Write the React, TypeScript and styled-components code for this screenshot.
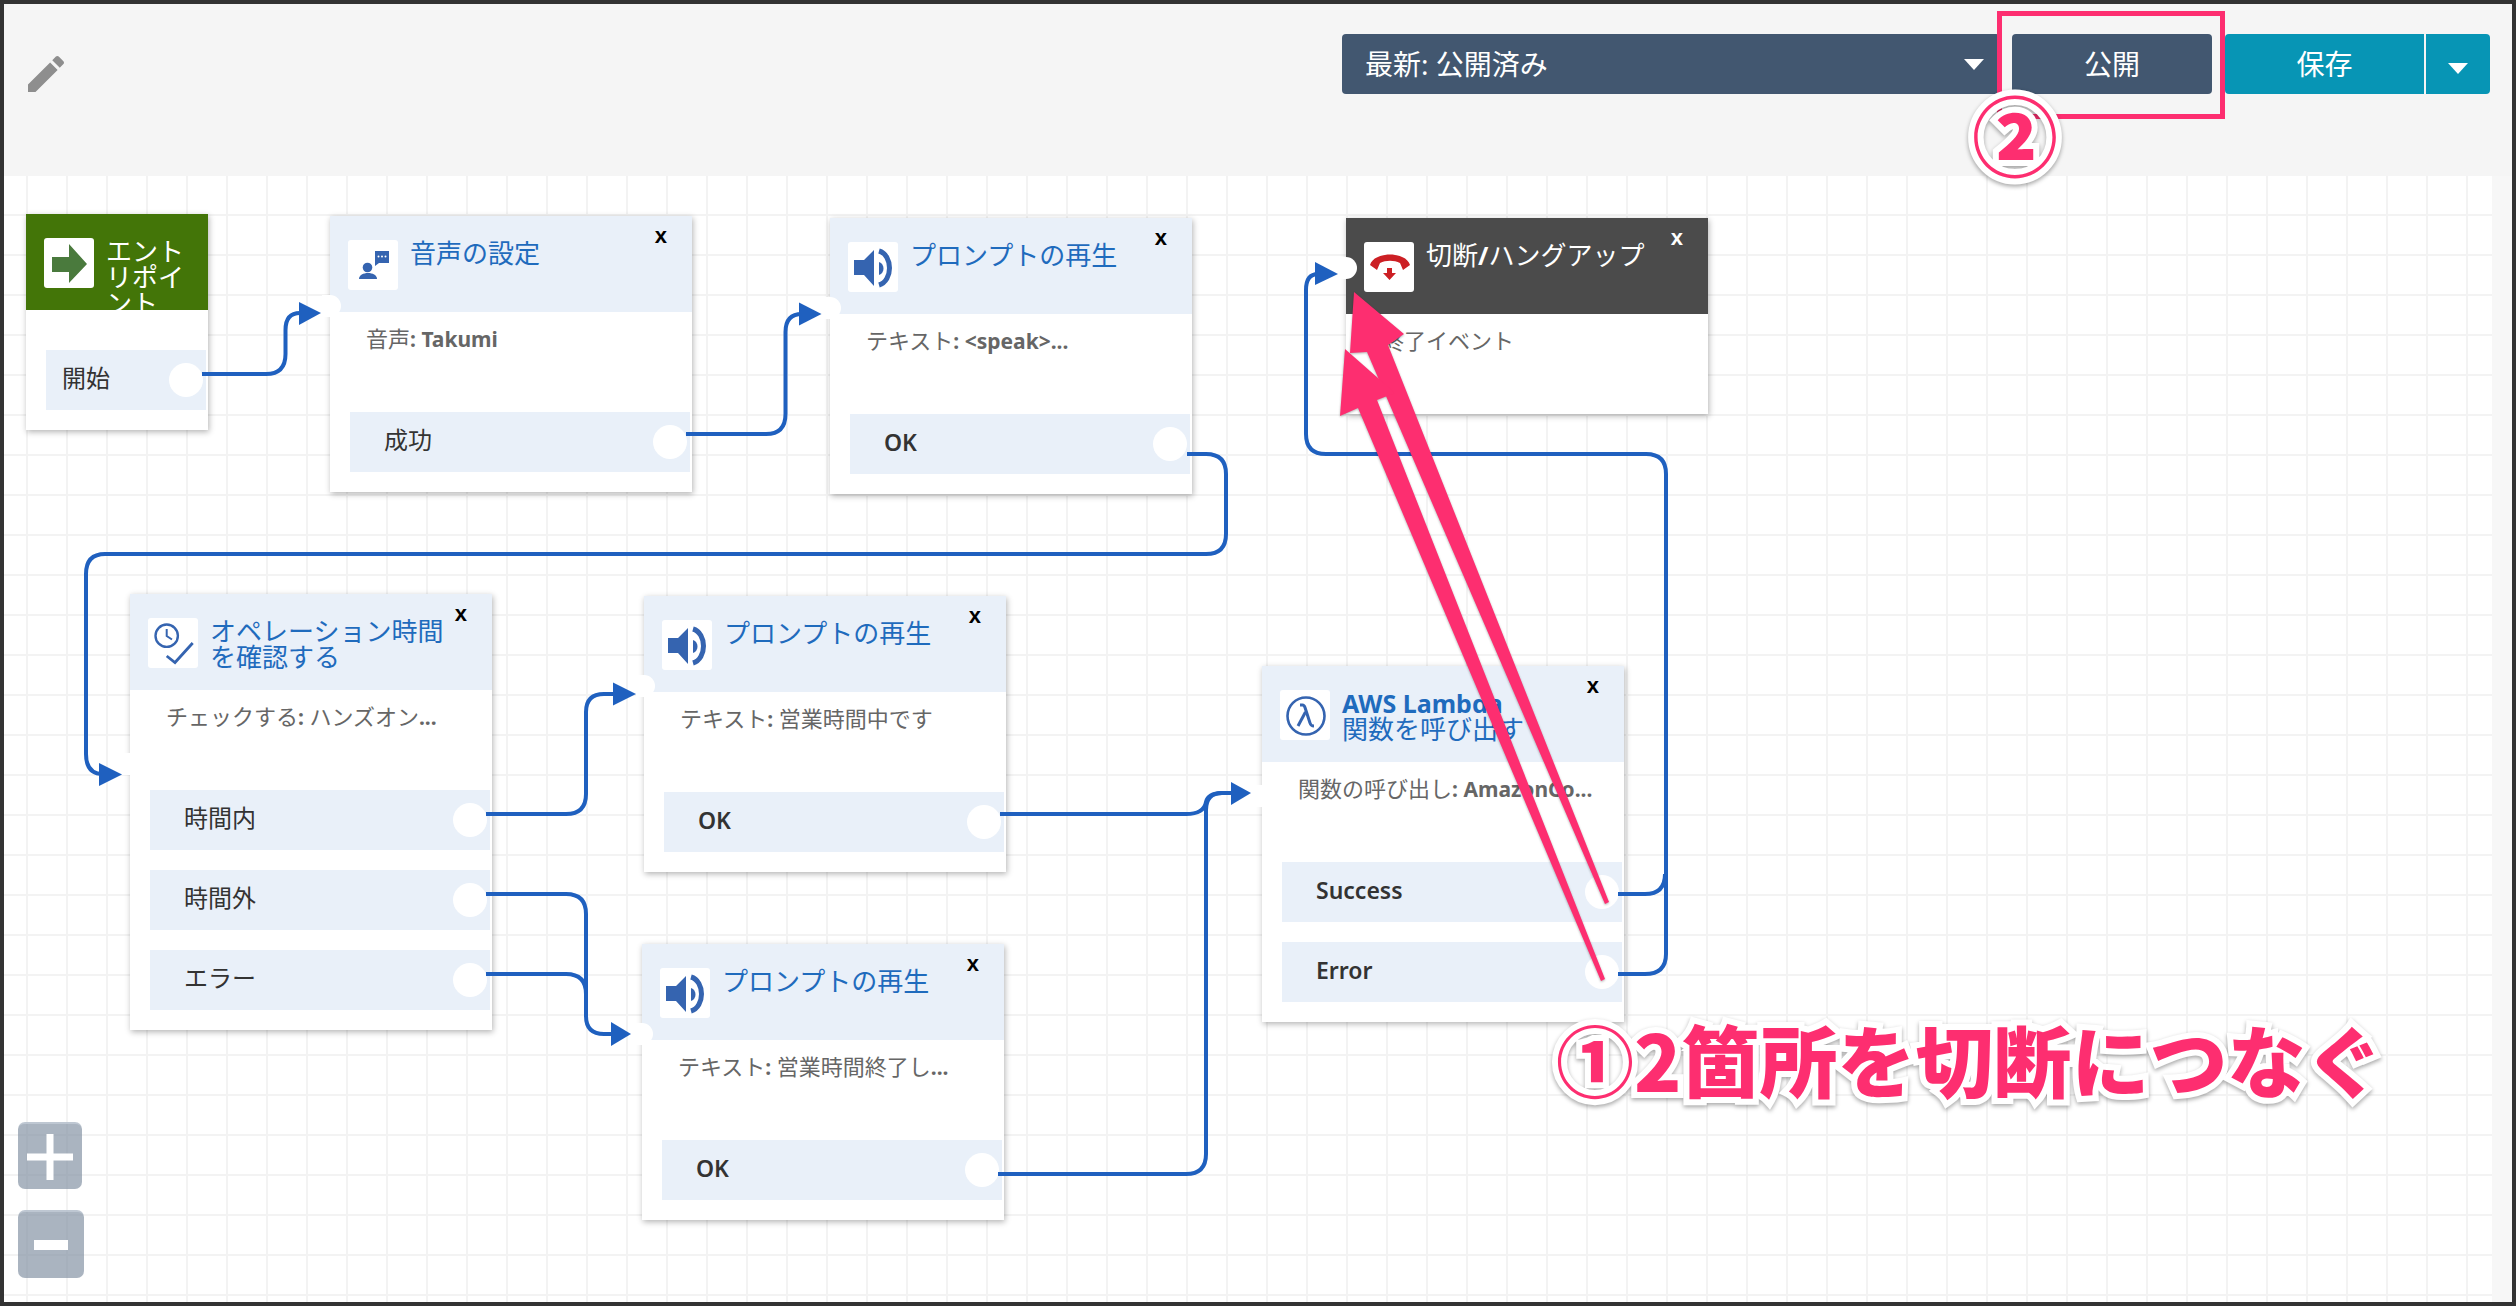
import React from 'react';
import styled, { createGlobalStyle } from 'styled-components';

const GlobalStyle = createGlobalStyle`
  html, body {
    margin: 0;
    padding: 0;
    background: #333;
  }
  body {
    font-family: "Noto Sans", "Noto Sans CJK JP", sans-serif;
  }
`;

const Frame = styled.div`
  position: relative;
  box-sizing: border-box;
  width: 2516px;
  height: 1306px;
  padding: 4px;
  background: #333;
  overflow: hidden;
`;

const Inner = styled.div`
  display: flex;
  flex-direction: column;
  height: 100%;
  background: #f7f7f7;
`;

const Toolbar = styled.div`
  display: flex;
  align-items: flex-start;
  box-sizing: border-box;
  height: 172px;
  padding: 30px 22px 0 18px;
  background: #f5f5f5;
`;

const PencilIcon = styled.svg`
  width: 48px;
  height: 48px;
  margin: 16px auto 0 0;
  fill: #8e8e8e;
`;

const SelectBox = styled.div`
  display: flex;
  align-items: center;
  justify-content: space-between;
  box-sizing: border-box;
  width: 658px;
  height: 60px;
  padding: 0 16px 3px 23px;
  margin-right: 12px;
  border-radius: 4px;
  background: #425770;
  color: #fff;
  font-size: 28px;
`;

const Caret = styled.span`
  width: 0;
  height: 0;
  margin-top: 3px;
  border-left: 10px solid transparent;
  border-right: 10px solid transparent;
  border-top: 11px solid #fff;
`;

const PublishButton = styled.div`
  display: flex;
  align-items: center;
  justify-content: center;
  box-sizing: border-box;
  width: 200px;
  height: 60px;
  padding-bottom: 3px;
  margin-right: 13px;
  border-radius: 4px;
  background: #425770;
  color: #fff;
  font-size: 28px;
`;

const SaveButton = styled.div`
  display: flex;
  align-items: center;
  justify-content: center;
  box-sizing: border-box;
  width: 199px;
  height: 60px;
  padding-bottom: 3px;
  border-radius: 4px 0 0 4px;
  background: #0795b5;
  color: #fff;
  font-size: 28px;
`;

const SaveMenu = styled.div`
  display: flex;
  align-items: center;
  justify-content: center;
  width: 64px;
  height: 60px;
  padding-top: 5px;
  box-sizing: border-box;
  margin-left: 2px;
  border-radius: 0 4px 4px 0;
  background: #0795b5;
`;

const Canvas = styled.div`
  flex: 1;
  margin-right: 20px;
  background-color: #fff;
  background-image:
    linear-gradient(to right, #f3f3f3 2px, transparent 2px),
    linear-gradient(to bottom, #f3f3f3 2px, transparent 2px);
  background-size: 40px 40px;
  background-position: 22px 38px;
`;

const Card = styled.div<{ $x: number; $y: number; $w: number; $flush?: boolean }>`
  position: absolute;
  left: ${(p) => p.$x}px;
  top: ${(p) => p.$y}px;
  width: ${(p) => p.$w}px;
  padding-bottom: ${(p) => (p.$flush ? 0 : 20)}px;
  background: #fff;
  box-shadow: 1px 2px 6px rgba(0, 0, 0, 0.3);
`;

const CardHeader = styled.div<{ $bg: string }>`
  position: relative;
  display: flex;
  align-items: flex-start;
  gap: 12px;
  box-sizing: border-box;
  height: 96px;
  padding: 24px 0 0 18px;
  background: ${(p) => p.$bg};
  overflow: hidden;
`;

const IconTile = styled.svg`
  flex: none;
  width: 50px;
  height: 50px;
  border-radius: 3px;
  background: #fff;
`;

const CardTitle = styled.div<{ $color: string; $width: number }>`
  width: ${(p) => p.$width}px;
  font-size: 26px;
  line-height: 26px;
  color: ${(p) => p.$color};
  font-weight: 400;
  b {
    font-size: 25px;
    font-weight: 700;
  }
`;

const CloseMark = styled.span<{ $light?: boolean }>`
  position: absolute;
  top: 5px;
  right: 25px;
  font-family: "Liberation Sans", sans-serif;
  font-size: 22px;
  line-height: 30px;
  font-weight: 700;
  color: ${(p) => (p.$light ? '#fff' : '#000')};
`;

const CardBody = styled.div<{ $h: number }>`
  box-sizing: border-box;
  height: ${(p) => p.$h}px;
  padding: 13px 0 0 36px;
  font-size: 22px;
  line-height: 26px;
  color: #666;
  white-space: nowrap;
  b {
    font-size: 21px;
    font-weight: 700;
  }
`;

const RowList = styled.div`
  display: flex;
  flex-direction: column;
  gap: 20px;
  margin: 0 2px 0 20px;
`;

const Row = styled.div<{ $pad: number }>`
  display: flex;
  align-items: center;
  justify-content: space-between;
  box-sizing: border-box;
  height: 60px;
  padding: 0 3px 0 ${(p) => p.$pad}px;
  background: #e9f0f9;
  color: #333;
  font-size: 24px;
`;

const RowLabel = styled.span<{ $latin?: boolean }>`
  margin-bottom: ${(p) => (p.$latin ? 4 : 7)}px;
  font-size: ${(p) => (p.$latin ? 23 : 24)}px;
  font-weight: ${(p) => (p.$latin ? 600 : 400)};
`;

const Port = styled.span`
  width: 34px;
  height: 34px;
  border-radius: 50%;
  background: #fff;
`;

const InPort = styled.span<{ $top: number }>`
  position: absolute;
  left: -8px;
  top: ${(p) => p.$top}px;
  width: 19px;
  height: 22px;
  border-radius: 0 11px 11px 0;
  background: #fff;
`;

const WireLayer = styled.svg`
  position: absolute;
  left: 0;
  top: 0;
  width: 2516px;
  height: 1306px;
  pointer-events: none;
`;

const ZoomStack = styled.div`
  position: absolute;
  left: 18px;
  top: 1122px;
  display: flex;
  flex-direction: column;
  align-items: flex-start;
  gap: 21px;
`;

const ZoomButton = styled.div<{ $w: number; $h: number }>`
  display: flex;
  align-items: center;
  justify-content: center;
  width: ${(p) => p.$w}px;
  height: ${(p) => p.$h}px;
  box-sizing: border-box;
  border-radius: 7px;
  border-top: 2px solid rgba(200, 208, 218, 0.7);
  background: rgba(118, 134, 153, 0.62);
`;

const ZoomGlyph = styled.svg`
  width: 46px;
  height: 46px;
  fill: #fff;
`;

const PublishHighlight = styled.div`
  position: absolute;
  left: 1997px;
  top: 11px;
  width: 228px;
  height: 108px;
  box-sizing: border-box;
  border: 5px solid #fd2e70;
`;

const AnnotationText = styled.div`
  position: absolute;
  font-family: "Noto Sans CJK JP", sans-serif;
  font-weight: 900;
  color: #fd2e70;
  white-space: nowrap;
  -webkit-text-stroke: 12px #fff;
  paint-order: stroke fill;
  filter: drop-shadow(0 2px 2px rgba(0, 0, 0, 0.35));
`;

const StepTwo = styled(AnnotationText)`
  left: 1965px;
  top: 83px;
  width: 100px;
  text-align: center;
  font-size: 86px;
  line-height: 100px;
`;

const StepOne = styled(AnnotationText)`
  left: 1556px;
  top: 1008px;
  font-size: 78px;
  line-height: 100px;
`;

const PointerLayer = styled(WireLayer)`
  filter: drop-shadow(0 1px 1px rgba(0, 0, 0, 0.3));
`;

const tileBlue = '#3564b0';

const SpeakerIcon = () => (
  <IconTile viewBox="0 0 50 50">
    <path d="M6 18H16L26 8V44L16 33H6Z" fill={tileBlue} />
    <path d="M31 20C37 22 37 31 31 33Z" fill={tileBlue} />
    <path d="M31 9C45 13 45 39 31 43" fill="none" stroke={tileBlue} strokeWidth="5" />
  </IconTile>
);

const VoiceIcon = () => (
  <IconTile viewBox="0 0 50 50">
    <circle cx="19.5" cy="27.5" r="4.8" fill={tileBlue} />
    <path d="M11 39C11 31 29 31 29 39Z" fill={tileBlue} />
    <path d="M27 11H41V23H31L27 26Z" fill={tileBlue} />
    <circle cx="30.5" cy="16.5" r="1" fill="#fff" />
    <circle cx="34" cy="16.5" r="1" fill="#fff" />
    <circle cx="37.5" cy="16.5" r="1" fill="#fff" />
  </IconTile>
);

const ClockCheckIcon = () => (
  <IconTile viewBox="0 0 50 50">
    <circle cx="18.7" cy="17.7" r="11.2" fill="none" stroke={tileBlue} strokeWidth="2.4" />
    <path d="M18.7 11V18L24 21.5" fill="none" stroke={tileBlue} strokeWidth="2" />
    <path d="M18.7 38L27 44.5L44.7 25" fill="none" stroke={tileBlue} strokeWidth="2.8" />
  </IconTile>
);

const LambdaIcon = () => (
  <IconTile viewBox="0 0 50 50">
    <circle cx="26" cy="26" r="18.5" fill="none" stroke={tileBlue} strokeWidth="2.6" />
    <path d="M20 15H22.5C24 15 24.5 16 25 17.5L30 33C30.5 35 31.5 36 34 36" fill="none" stroke={tileBlue} strokeWidth="3" />
    <path d="M25.5 22L18 36" fill="none" stroke={tileBlue} strokeWidth="3" />
  </IconTile>
);

const HangupIcon = () => (
  <IconTile viewBox="0 0 50 50">
    <path d="M6 23C10 9 42 9 46 23L39 28L36 21C30 18 22 18 16 21L13 28Z" fill="#cc1f24" />
    <path d="M23 26H28V31H32L25.5 38L19 31H23Z" fill="#cc1f24" />
  </IconTile>
);

const EntryIcon = () => (
  <IconTile viewBox="0 0 50 50">
    <path d="M8 19H25V6L43 26L25 45V34H8Z" fill="#4a7a3d" />
  </IconTile>
);

interface NodeProps {
  x: number;
  y: number;
  icon: React.ReactNode;
  title: React.ReactNode;
  body: React.ReactNode;
  rows: string[];
  port: number;
}

const NodeCard: React.FC<NodeProps> = ({ x, y, icon, title, body, rows, port }) => (
  <Card $x={x} $y={y} $w={362}>
    <CardHeader $bg="#e9f0f9">
      {icon}
      <CardTitle $color="#1f6bbd" $width={260}>{title}</CardTitle>
      <CloseMark>x</CloseMark>
    </CardHeader>
    <CardBody $h={100}>{body}</CardBody>
    <RowList>
      {rows.map((row) => (
        <Row key={row} $pad={34}>
          <RowLabel $latin={/^[A-Za-z]/.test(row)}>{row}</RowLabel>
          <Port />
        </Row>
      ))}
    </RowList>
    <InPort $top={port} />
  </Card>
);

const wires = [
  'M202 374H266Q285.5 374 285.5 354V330Q285.5 313 300 313',
  'M686 434H766Q785.5 434 785.5 414V332Q785.5 314 802 314',
  'M1187 454H1206Q1226 454 1226 474V534Q1226 554 1206 554H105Q86 554 86 574V754Q86 774 103 774',
  'M486 814H566Q586 814 586 794V712Q586 694 604 694H615',
  'M486 894H566Q586 894 586 914V1016Q586 1034 604 1034H612',
  'M486 974H566Q586 974 586 994',
  'M1000 814H1186Q1204 814 1206 802Q1208 793 1222 793H1233',
  'M998 1174H1186Q1206 1174 1206 1154V810Q1206 793 1222 793',
  'M1618 894H1645Q1665 894 1665 874',
  'M1618 974H1645Q1666 974 1666 954V474Q1666 454 1646 454H1326Q1306 454 1306 434V290Q1306 274 1318 274',
];

const wireHeads = [
  '299,302 321,313 299,325',
  '799,302.5 821.5,314 799,325.5',
  '99,763 122,774.5 99,786',
  '613,682.5 636,694 613,705.5',
  '611,1022 631,1034 611,1046',
  '1231,782 1251,793 1231,805',
  '1315,262 1338,274 1315,285',
];

const App: React.FC = () => (
  <>
    <GlobalStyle />
    <Frame>
      <Inner>
        <Toolbar>
          <PencilIcon viewBox="0 0 24 24">
            <path d="M3 17.25V21h3.75L17.81 9.94l-3.75-3.75L3 17.25zM20.71 7.04c.39-.39.39-1.02 0-1.41l-2.34-2.34c-.39-.39-1.02-.39-1.41 0l-1.83 1.83 3.75 3.75 1.83-1.83z" />
          </PencilIcon>
          <SelectBox>
            最新: 公開済み
            <Caret />
          </SelectBox>
          <PublishButton>公開</PublishButton>
          <SaveButton>保存</SaveButton>
          <SaveMenu>
            <Caret />
          </SaveMenu>
        </Toolbar>
        <Canvas>
          <Card $x={26} $y={214} $w={182}>
            <CardHeader $bg="#437508">
              <EntryIcon />
              <CardTitle $color="#fff" $width={84}>エントリポイント</CardTitle>
            </CardHeader>
            <CardBody $h={40} />
            <RowList>
              <Row $pad={16}>
                <RowLabel>開始</RowLabel>
                <Port />
              </Row>
            </RowList>
          </Card>

          <NodeCard
            x={330}
            y={216}
            icon={<VoiceIcon />}
            title="音声の設定"
            body={<>音声<b>: Takumi</b></>}
            rows={['成功']}
            port={79}
          />
          <NodeCard
            x={830}
            y={218}
            icon={<SpeakerIcon />}
            title="プロンプトの再生"
            body={<>テキスト<b>: &lt;speak&gt;...</b></>}
            rows={['OK']}
            port={79}
          />

          <Card $x={1346} $y={218} $w={362} $flush>
            <CardHeader $bg="#4b4b4b">
              <HangupIcon />
              <CardTitle $color="#fff" $width={260}>
                切断<b>/</b>ハングアップ
              </CardTitle>
              <CloseMark $light>x</CloseMark>
            </CardHeader>
            <CardBody $h={100}>終了イベント</CardBody>
            <InPort $top={39} />
          </Card>

          <NodeCard
            x={130}
            y={594}
            icon={<ClockCheckIcon />}
            title={<>オペレーション時間<br />を確認する</>}
            body={<>チェックする<b>: </b>ハンズオン<b>...</b></>}
            rows={['時間内', '時間外', 'エラー']}
            port={159}
          />
          <NodeCard
            x={644}
            y={596}
            icon={<SpeakerIcon />}
            title="プロンプトの再生"
            body={<>テキスト<b>: </b>営業時間中です</>}
            rows={['OK']}
            port={79}
          />
          <NodeCard
            x={642}
            y={944}
            icon={<SpeakerIcon />}
            title="プロンプトの再生"
            body={<>テキスト<b>: </b>営業時間終了し<b>...</b></>}
            rows={['OK']}
            port={79}
          />
          <NodeCard
            x={1262}
            y={666}
            icon={<LambdaIcon />}
            title={<><b>AWS Lambda</b><br />関数を呼び出す</>}
            body={<>関数の呼び出し<b>: AmazonCo...</b></>}
            rows={['Success', 'Error']}
            port={119}
          />
        </Canvas>
      </Inner>

      <WireLayer viewBox="0 0 2516 1306">
        {wires.map((d) => (
          <path key={d} d={d} fill="none" stroke="#1f60bf" strokeWidth="4" />
        ))}
        {wireHeads.map((points) => (
          <polygon key={points} points={points} fill="#1f60bf" />
        ))}
      </WireLayer>

      <ZoomStack>
        <ZoomButton $w={64} $h={67}>
          <ZoomGlyph viewBox="0 0 46 46">
            <path d="M19.5 0H26.5V19.5H46V26.5H26.5V46H19.5V26.5H0V19.5H19.5Z" />
          </ZoomGlyph>
        </ZoomButton>
        <ZoomButton $w={66} $h={68}>
          <ZoomGlyph viewBox="0 0 46 46">
            <path d="M6 18H40V28H6Z" />
          </ZoomGlyph>
        </ZoomButton>
      </ZoomStack>

      <PublishHighlight />
      <StepTwo>②</StepTwo>

      <PointerLayer viewBox="0 0 2516 1306">
        <polygon
          points="1354,292 1404,334 1388,345 1609,902 1605,904 1367,352 1350,353"
          fill="#fd2e70"
        />
        <polygon
          points="1345,349 1395,393 1377,400 1605,979 1601,981 1358,408 1340,416"
          fill="#fd2e70"
        />
      </PointerLayer>

      <StepOne>①2箇所を切断につなぐ</StepOne>
    </Frame>
  </>
);

export default App;
